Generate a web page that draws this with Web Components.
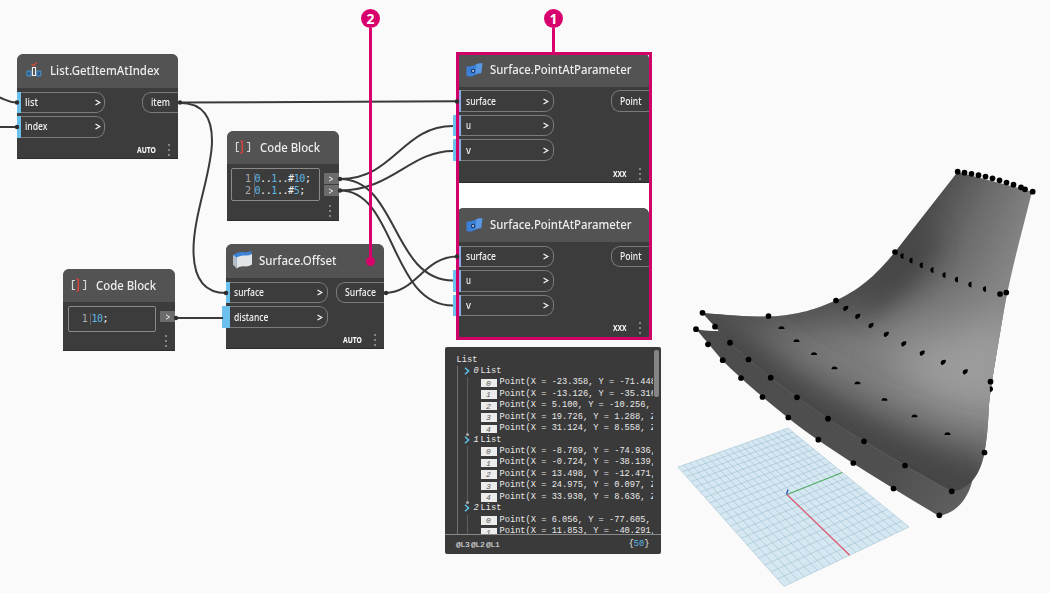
<!DOCTYPE html>
<html lang="en">
<head>
<meta charset="utf-8">
<title>Surface.PointAtParameter graph</title>
<style>
html,body{margin:0;padding:0;background:#fafafa;overflow:hidden}
body{width:1050px;height:593px;font-family:"Noto Sans","Open Sans",sans-serif}
</style>
</head>
<body>
<graph-workspace></graph-workspace>
<script>
const mount = (el, html) => { el.attachShadow({mode:'open'}).innerHTML = html; };

class PortIn extends HTMLElement {
  connectedCallback() {
    if (this.shadowRoot) return;
    mount(this, `<style>
      :host{display:flex;position:relative;box-sizing:border-box;height:21.5px;width:var(--in-w,88px);align-items:center;justify-content:space-between;padding:0 3.5px 1px 7.5px;border:1px solid #7b7b7b;border-left:0;border-radius:0 9px 9px 0;color:#f2f2f2}
      i{position:absolute;left:0;top:-1px;bottom:-1px;width:3.5px;background:var(--bar,#6cc1ec)}
      b{position:absolute;left:var(--stub-left,-4px);top:-1px;bottom:-1px;width:4px;background:#6cc1ec;display:none}
      :host([stub]) b{display:block}
      svg{display:block;margin-top:1px}
    </style><i></i><b></b><slot></slot><svg width="6" height="7" viewBox="0 0 6 7"><path d="M.5 1 4.800 3.500 .5 6" fill="none" stroke="#f4f4f4" stroke-width="1.300"/></svg>`);
  }
}
class PortOut extends HTMLElement {
  connectedCallback() {
    if (this.shadowRoot) return;
    mount(this, `<style>
      :host{display:flex;box-sizing:border-box;height:21.5px;width:var(--out-w,36px);align-items:center;padding:0 0 1px 8px;border:1px solid #7b7b7b;border-right:0;border-radius:9px 0 0 9px;color:#f2f2f2}
    </style><slot></slot>`);
  }
}
class MoreDots extends HTMLElement {
  connectedCallback() {
    if (this.shadowRoot) return;
    mount(this, `<style>:host{display:flex;flex-direction:column;gap:3px}i{width:2px;height:2px;background:#858585}</style><i></i><i></i><i></i>`);
  }
}
class GraphNode extends HTMLElement {
  connectedCallback() {
    if (this.shadowRoot) return;
    mount(this, `<style>
      :host{position:absolute;display:flex;flex-direction:column;box-sizing:border-box;background:#3c3c3c;border-radius:7px 7px 0 0;overflow:visible;border-bottom:1px solid #2c2c2c}
      header{flex:none;height:33.5px;background:#535353;border-radius:6px 6px 0 0;display:flex;align-items:center;color:#eee}
      header slot{display:block}
      .icon{width:var(--title-x,33px);height:100%;display:flex;align-items:center;padding-top:3px;box-sizing:border-box}
      .body{display:flex;justify-content:space-between;align-items:flex-start;padding-top:var(--gap-top,4px)}
      .ins{display:flex;flex-direction:column;gap:3px}
      footer{margin-top:auto;display:flex;justify-content:flex-end;align-items:center;gap:12px;padding:0 8px 3px 0;height:11px;color:#fff}
    </style>
    <header><div class="icon"><slot name="icon"></slot></div><slot name="title"></slot></header>
    <div class="body"><div class="ins"><slot></slot></div><slot name="out"></slot></div>
    <footer><slot name="mode"></slot><more-dots></more-dots></footer>`);
  }
}
class CodeEditor extends HTMLElement {
  connectedCallback() {
    if (this.shadowRoot) return;
    const lines = this.getAttribute('code').split('|');
    const rows = lines.map((l, n) => `<div class="r"><span class="n">${n+1}</span><span class="c">${l.replace(/(\d+)/g,'<em>$1</em>')}</span></div>`).join('');
    mount(this, `<style>
      :host{display:flex;align-items:flex-start;gap:4px;padding-left:4.5px;width:var(--w)}
      .box{box-sizing:border-box;width:88.5px;height:var(--h);border:1px solid #8b8b8b;border-radius:2px;padding:var(--pt,4px) 0 0 11px}
      .r{display:flex;height:12px;font:10px/12px "DejaVu Sans Mono","Liberation Mono",monospace;letter-spacing:-.42px;color:#f0f0f0}
      .n{width:9.5px;padding-right:1px;border-right:1px solid #666;color:#aaa;text-align:center}
      em{font-style:normal;color:#5db8e6}
      .outs{display:flex;flex-direction:column;gap:1px;margin-top:5px;flex:1}
      .o{height:11px;background:#6c6c6c;display:flex;align-items:center;justify-content:center}
    </style><div class="box">${rows}</div><div class="outs">${lines.map(()=>`<div class="o"><svg width="6" height="6" viewBox="0 0 6 6"><path d="M1 .8 4.6 3 1 5.2" fill="none" stroke="#eee"/></svg></div>`).join('')}</div>`);
  }
}
class CodeIcon extends HTMLElement {
  connectedCallback() {
    if (this.shadowRoot) return;
    mount(this, `<style>:host{display:block;margin:-3px 0 0 8px}svg{display:block}</style>
    <svg width="16" height="14" viewBox="0 0 16 14" fill="none"><path d="M4 2.500H1.500v9H4M12 2.500h2.500v9H12" stroke="#d6d6d6" stroke-width="1.200"/><path d="M5.500 1.300h2M5.500 12.700h2M7.300 1v12" stroke="#d84040" stroke-width="1.500"/></svg>`);
  }
}
class PreviewList extends HTMLElement {
  connectedCallback() {
    if (this.shadowRoot) return;
    const data = [
      ['X = -23.358, Y = -71.448','X = -13.126, Y = -35.316','X = 5.100, Y = -10.256, ','X = 19.726, Y = 1.288, Z','X = 31.124, Y = 8.558, Z'],
      ['X = -8.769, Y = -74.936,','X = -0.724, Y = -38.139,','X = 13.498, Y = -12.471,','X = 24.975, Y = 0.097, Z','X = 33.930, Y = 8.636, Z'],
      ['X = 6.056, Y = -77.605,','X = 11.853, Y = -40.291,']];
    const html = data.map((g, i) => `<div class="r h"><svg width="6" height="8" viewBox="0 0 6 8"><path d="M1 .8 4.6 4 1 7.2" fill="none" stroke="#5cc3ea" stroke-width="1.5"/></svg><i>${i}</i><span>List</span></div>`
      + `<div class="g${i<2?' end':''}">` + g.map((t, k) => `<div class="r"><b>${k}</b><span>Point(${t}</span></div>`).join('') + '</div>').join('');
    mount(this, `<style>
      :host{position:absolute;display:flex;flex-direction:column;background:#3a3a3a;border-radius:2px;overflow:hidden;color:#e9e9e9;font:8.7px/11.45px "Liberation Mono","DejaVu Sans Mono",monospace}
      main{height:187.500px;box-sizing:border-box;display:flex;justify-content:space-between;border-bottom:1px solid #8a8a8a;overflow:hidden}
      .list{padding:7.500px 0 0 11.500px;width:208px;box-sizing:border-box;overflow:hidden;white-space:pre}
      .tree{border-left:1px solid #707070;height:200px}
      .r{display:flex;height:11.45px;align-items:center}
      .h{padding-left:6px}
      .h svg{flex:none;margin-top:-1px}
      .h i{width:9px;text-align:center;margin-left:2px}
      .g{margin-left:9.500px;border-left:1px solid #5d5d5d;padding-left:12.500px;position:relative}
      .end::after{content:"";position:absolute;left:-2px;bottom:-4px;width:3px;height:3px;border-radius:2px;background:#aaa}
      .end::after{bottom:-1px}
      b{flex:none;width:16px;height:8.500px;background:#ececec;color:#555;font:italic 8px/9px "Liberation Mono",monospace;text-align:center;margin-right:3px}
      .bar{width:5.500px;height:47px;background:#858585;border-radius:2px;margin:2.500px 2px 0 0}
      footer{flex:1;display:flex;justify-content:space-between;align-items:center;padding:2px 11.500px 0 11px}
      footer span{font-size:8px;letter-spacing:-.3px;word-spacing:-3px}
      footer em{font-style:normal;color:#5db8e6}
    </style>
    <main><div class="list"><div class="r">List</div><div class="tree">${html}</div></div><div class="bar"></div></main>
    <footer><span>@L3 @L2 @L1</span><div>{<em>50</em>}</div></footer>`);
  }
}
class WireLayer extends HTMLElement {
  connectedCallback() {
    if (this.shadowRoot) return;
    const ends = [[17,102.5],[17,127],[180,102.5],[457,101.5],[226,293],[340,179],[340,190.5],[176,318],[386,293],[457,256.5]];
    mount(this, `<style>:host{position:absolute;inset:0;display:block}svg{display:block}</style>
    <svg width="1050" height="593" viewBox="0 0 1050 593" fill="none" stroke="#3a3a3a" stroke-width="2">
      <path d="M-2 97C5 99 7 102.5 17 102.5M-2 127H17M179 102.600 457 101.200"/>
      <path d="M179 102.8C204 103 212 118 212 141 212 172 193.5 214 193.5 250 193.5 277 203 293 226 293"/>
      <path d="M340 179C394 179 402 126 453 126M340 190.5C392 190.5 410 151 453 151"/>
      <path d="M340 179C398 179 392 280.500 453 280.500M340 190.500C396 190.500 390 305.500 453 305.500"/>
      <path d="M385 293C416 293 424 256.500 457 256.500M176 318H223"/>
      <g stroke="none" fill="#2e2e2e">${ends.map(e=>`<circle cx="${e[0]}" cy="${e[1]}" r="2.200"/>`).join('')}</g>
    </svg>`);
  }
}
class SurfaceScene extends HTMLElement {
  connectedCallback() {
    if (this.shadowRoot) return;
    // projective map of the unit square onto the ground plane corners
    const [p0,p1,p2,p3] = [[678,467],[788,428],[909,527],[784,586.5]];
    const dx1=p1[0]-p2[0], dx2=p3[0]-p2[0], sx=p0[0]-p1[0]+p2[0]-p3[0];
    const dy1=p1[1]-p2[1], dy2=p3[1]-p2[1], sy=p0[1]-p1[1]+p2[1]-p3[1];
    const D=dx1*dy2-dx2*dy1, g=(sx*dy2-dx2*sy)/D, h=(dx1*sy-sx*dy1)/D;
    const map=(u,v)=>{const w=g*u+h*v+1;
      return ((( p1[0]-p0[0]+g*p1[0])*u+(p3[0]-p0[0]+h*p3[0])*v+p0[0])/w).toFixed(1)+' '+(((p1[1]-p0[1]+g*p1[1])*u+(p3[1]-p0[1]+h*p3[1])*v+p0[1])/w).toFixed(1);};
    let grid='';
    for(let i=0;i<=20;i++){const t=i/20; grid+=`M${map(t,0)}L${map(t,1)}M${map(0,t)}L${map(1,t)}`;}
    const full=[[957.7,171.7],[964.5,172.700],[971.5,173.800],[978.5,175.200],[985.5,176.500],[992.5,178.300],[999.5,180.300],[1006.500,182.500],[1013.500,184.700],[1021,187.300],[1025,189.300],[1032.700,191.700],
      [1000,294],[1006.300,292.500],[702.500,312.800],[715,326.700],[730,342.700],[748.500,359.500],[770.700,377.700],[797,397.300],[828,418.700],[864,441.300],[905,465.500],[951.700,491.300],
      [696,329.200],[708,344.300],[722.700,360.200],[741,378],[762.500,397],[788.300,417.500],[818.300,439.700],[853.300,463],[893.500,488.500],[939.300,515.300],[990.500,381.700],[984.500,452.500],[895,252],[836,300.500],[768.500,316]];
    const vert=[[902,256],[911,260.500],[921.300,265.300],[932,270],[944,275],[956.500,279.500],[970,284.500],[984.500,289],[991.300,389]];
    const diag=[[846,308.500],[858,316.500],[871.300,325.700],[886.500,334.500],[904,344],[922.500,353.300],[943.500,362.500],[965.500,372]];
    const half=[[781.500,328.200],[796.500,341.200],[814,354.200],[834.500,368.500],[857.500,383.500],[884.500,400],[914.500,416.500],[947.500,434.200]];
    mount(this, `<style>:host{position:absolute;inset:0;display:block}svg{display:block}</style>
    <svg width="1050" height="593" viewBox="0 0 1050 593">
      <defs>
        <clipPath id="up"><path d="M957.500 172 1032 191.500C1022 232 1010 275 1004 310 998 345 991 385 989 405 988 425 987 440 984 455 979 477 968 490 951.500 491.500 C905 466 865 442 828 419 790 393 752 365 730 343L702.500 313C728 315 750 317 770 316.500 800 315 815 309 836 300.500 865 287 880 270 895 252Z"/></clipPath>
        <linearGradient id="low" gradientUnits="userSpaceOnUse" x1="700" y1="330" x2="965" y2="510"><stop offset="0" stop-color="#4c4c4c"/><stop offset=".75" stop-color="#505050"/><stop offset="1" stop-color="#606060"/></linearGradient>
        <linearGradient id="top" gradientUnits="userSpaceOnUse" x1="915" y1="225" x2="1010" y2="272"><stop offset="0" stop-color="#4a4a4a"/><stop offset=".5" stop-color="#6c6c6c"/><stop offset="1" stop-color="#868686"/></linearGradient>
        <filter id="b8" x="-50%" y="-50%" width="200%" height="200%"><feGaussianBlur stdDeviation="12"/></filter>
        <filter id="b16" x="-50%" y="-50%" width="200%" height="200%"><feGaussianBlur stdDeviation="20"/></filter>
      </defs>
      <path d="M${map(0,0)}L${map(1,0)} ${map(1,1)} ${map(0,1)}Z" fill="#d5e7f1"/>
      <path d="${grid}" stroke="#86afc5" stroke-opacity=".6" stroke-width=".7" fill="none"/>
      <path d="M787 494.500 ${map(1,.5)}" stroke="#56ae63" stroke-width="1.100"/>
      <path d="M787 494.500 ${map(.5,1)}" stroke="#e2566c" stroke-width="1.200"/>
      <path d="M786.500 494.500 788 489.500" stroke="#3a62c4" stroke-width="1.500"/>
      <path d="M696 329C705 331 712 331 718 331L760 340 978 452 972 482C967 500 956 513 939 516 C890 487 850 462 818 440 785 417 745 383 722 360Z" fill="url(#low)"/>
      <g clip-path="url(#up)">
        <rect x="690" y="160" width="350" height="350" fill="url(#top)"/>
        <path d="M680 325 770 325C830 328 860 318 900 300L1030 290 1020 480 940 520 680 380Z" fill="#7c7c7c" filter="url(#b16)"/>
        <path d="M880 355 1030 300 1015 425 930 400Z" fill="#9c9c9c" filter="url(#b16)"/>
        <path d="M862 305 895 255 925 218 938 250 905 290 865 318Z" fill="#444" opacity=".85" filter="url(#b8)"/>
        <path d="M680 290 735 318 790 368 880 418 955 447 1000 452 1000 530 900 520 670 380Z" fill="#4a4a4a" filter="url(#b16)"/>
        <path d="M680 310 740 338 820 398 900 440 960 470 1000 475 980 530 830 470Z" fill="#444" opacity=".7" filter="url(#b8)"/>
      </g>
      <path d="M730 343C760 370 790 393 828 419 865 442 905 466 951.500 491.500" fill="none" stroke="#666" stroke-width=".7" opacity=".6"/>
      <g fill="#000">
        ${full.map(p=>`<circle cx="${p[0]}" cy="${p[1]}" r="2.850"/>`).join('')}
        ${vert.map((p,i)=>`<path transform="translate(${p[0]} ${p[1]})${i==8?' scale(-1 1)':''}" d="M1.500-2.800V2.800A3 2.900 0 0 1-1.700 0 3 2.900 0 0 1 1.500-2.800"/>`).join('')}
        ${diag.map(p=>`<path transform="translate(${p[0]} ${p[1]})" d="M2.500-2.600 1.800.5-1.200 2.700A2.700 2.700 0 0 1-2-1.700Q0-3.300 2.500-2.600"/>`).join('')}
        ${half.map(p=>`<path transform="translate(${p[0]} ${p[1]})" d="M-3 .8A3 2.800 0 0 1 3 .8Z"/>`).join('')}
      </g>
    </svg>`);
  }
}
class CalloutPin extends HTMLElement {
  connectedCallback() {
    if (this.shadowRoot) return;
    mount(this, `<style>
      :host{position:absolute;display:flex;flex-direction:column;align-items:center;width:19px}
      .n{width:19px;height:19px;border-radius:50%;background:#d8006c;color:#fff;font:bold 14px/19px "Noto Sans",sans-serif;text-align:center}
      .s{width:3px;flex:1;background:#d8006c}
      .d{display:none;width:9px;height:9px;border-radius:50%;background:#d8006c;margin-top:-5px}
      :host([dot]) .d{display:block}
    </style><div class="n"><slot></slot></div><div class="s"></div><div class="d"></div>`);
  }
}
class FocusFrame extends HTMLElement {
  connectedCallback() {
    if (this.shadowRoot) return;
    mount(this, `<style>:host{position:absolute;display:block;box-sizing:border-box;border:3px solid #d0026a}</style>`);
  }
}
class GraphWorkspace extends HTMLElement {
  connectedCallback() {
    if (this.shadowRoot) return;
    const pap = (top, h, gap) => `
      <graph-node style="left:457px;top:${top}px;width:191.500px;height:${h}px;--title-x:33px;--gap-top:${gap}px;--bar:#8fa9e6;--in-w:96.500px;--out-w:37.500px;--stub-left:-4px">
        <svg slot="icon" style="margin-left:7.500px" width="19" height="16" viewBox="0 0 20 17"><path d="M1.500 4.500Q8 5.500 12 2.500 15 1 18.500 1.500L17 12Q13 11.500 10 14 6 16.200 1.500 15Z" fill="#3b80d8"/><path d="M12 2.500Q15 1 18.500 1.500L17 12Q14 11.500 11 13.300Z" fill="#5a98e4"/><circle cx="8.500" cy="9.500" r="2.400" fill="#1b3f78"/><circle cx="8.500" cy="9.500" r=".9" fill="#fff"/></svg>
        <fit-label slot="title" size="12.8" w="141.500">Surface.PointAtParameter</fit-label>
        <port-in style="padding-left:8.500px"><fit-label size="10" w="30">surface</fit-label></port-in>
        <port-in style="padding-left:8.500px" stub><fit-label size="10" w="5">u</fit-label></port-in>
        <port-in style="padding-left:8.500px" stub><fit-label size="10" w="5">v</fit-label></port-in>
        <port-out slot="out"><fit-label size="10" w="21.500">Point</fit-label></port-out>
        <fit-label slot="mode" size="8.500" bold w="13.500">XXX</fit-label>
      </graph-node>`;
    mount(this, `<style>
      :host{display:block;position:relative;width:1050px;height:593px;background:#fafafa;overflow:hidden}
      .white{position:absolute;left:458px;top:180px;width:192px;height:34px;background:#fff}
    </style>
    <surface-scene></surface-scene>
    <div class="white"></div>
    <graph-node style="left:17.400px;top:54px;width:161px;height:105.400px">
      <svg slot="icon" style="margin-left:9px" width="16" height="16" viewBox="0 0 16 16"><g fill="#2e5f8c" stroke="#4b93cf" stroke-width="1"><path d="M1 9h4v5H1zM10.800 9h4v5h-4z"/></g><path d="M6.500 5.500h3v8h-3z" fill="#444" stroke="#f0f0f0" stroke-width="1.200"/><path d="M5.500 1.800 7.500 3.600 11 .5" fill="none" stroke="#d0493c" stroke-width="1.400"/></svg>
      <fit-label slot="title" size="12.800" w="109.500">List.GetItemAtIndex</fit-label>
      <port-in><fit-label size="10" w="13">list</fit-label></port-in>
      <port-in><fit-label size="10" w="22.500">index</fit-label></port-in>
      <port-out slot="out"><fit-label size="10" w="19">item</fit-label></port-out>
      <fit-label slot="mode" size="8.500" bold w="19">AUTO</fit-label>
    </graph-node>
    <graph-node style="left:226.500px;top:130.500px;width:112px;height:90px;--gap-top:4px;--w:107.500px;--h:33px">
      <code-icon slot="icon"></code-icon>
      <fit-label slot="title" size="12.800" w="60">Code Block</fit-label>
      <code-editor code="0..1..#10;|0..1..#5;"></code-editor>
    </graph-node>
    <graph-node style="left:63.400px;top:268.700px;width:111.500px;height:82px;--gap-top:4px;--w:107px;--h:25.500px;--pt:6px">
      <code-icon slot="icon"></code-icon>
      <fit-label slot="title" size="12.800" w="60">Code Block</fit-label>
      <code-editor code="10;"></code-editor>
    </graph-node>
    <graph-node style="left:226.400px;top:244.300px;width:158px;height:105.200px;--in-w:101.500px;--out-w:48px">
      <svg slot="icon" style="margin-left:6px" width="21" height="20" viewBox="0 0 21 20"><path d="M1 5Q6 1.500 11 2 16 3 19.500.8V11L3 15Z" fill="#3c83d6"/><path d="M4.500 7.500Q9 5 13 5.500 17 5.800 20 4V14.500Q16 17 12 16.300 8 16 4.500 18.500Z" fill="#e2e5e8"/><path d="M4.500 7.500 1 5V14.500L4.500 18.500Z" fill="#b6bcc3"/></svg>
      <fit-label slot="title" size="12.800" w="77.500">Surface.Offset</fit-label>
      <port-in><fit-label size="10" w="30">surface</fit-label></port-in>
      <port-in stub><fit-label size="10" w="34.500">distance</fit-label></port-in>
      <port-out slot="out"><fit-label size="10" w="31">Surface</fit-label></port-out>
      <fit-label slot="mode" size="8.500" bold w="19">AUTO</fit-label>
    </graph-node>
    ${pap(53.4,129.800,3.6)}
    ${pap(208.4,129.500,3.800)}
    <preview-list style="left:445px;top:347px;width:216px;height:206.500px"></preview-list>
    <focus-frame style="left:456px;top:52px;width:196px;height:288px"></focus-frame>
    <wire-layer></wire-layer>
    <callout-pin style="left:544px;top:9px;height:44px">1</callout-pin>
    <callout-pin dot style="left:361px;top:9px;height:257px">2</callout-pin>`);
  }
}
class FitLabel extends HTMLElement {
  connectedCallback() {
    if (this.shadowRoot) return;
    const w = +this.getAttribute('w'), size = +this.getAttribute('size');
    mount(this, `<style>
      :host{display:block;width:${w}px;white-space:nowrap;font-size:${size}px;line-height:1.2;flex:none}
      span{display:inline-block;transform-origin:0 50%;font-weight:${this.hasAttribute('bold')?700:500}}
    </style><span><slot></slot></span>`);
    const s = this.shadowRoot.querySelector('span');
    const natural = s.getBoundingClientRect().width;
    if (natural) s.style.transform = `scaleX(${w / natural})`;
  }
}
[['port-in',PortIn],['port-out',PortOut],['more-dots',MoreDots],['graph-node',GraphNode],['code-editor',CodeEditor],['code-icon',CodeIcon],['preview-list',PreviewList],['wire-layer',WireLayer],['surface-scene',SurfaceScene],['callout-pin',CalloutPin],['focus-frame',FocusFrame],['graph-workspace',GraphWorkspace],['fit-label',FitLabel]].forEach(([n,c])=>customElements.define(n,c));
</script>
</body>
</html>
